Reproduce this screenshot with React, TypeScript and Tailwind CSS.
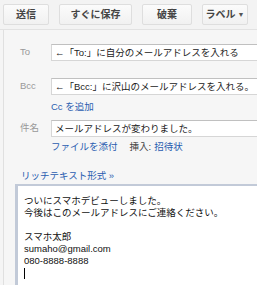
const font = { fontFamily: '"Liberation Sans", "Noto Sans CJK JP", sans-serif' };

function ToolButton({ label, w, caret }: { label: string; w: string; caret?: boolean }) {
  return (
    <div
      className={`flex h-[21px] ${w} items-center justify-center gap-[2px] rounded-[2px] border border-[#dedede] bg-gradient-to-b from-[#fbfbfb] to-[#f1f1f1] text-[10px] font-bold leading-none text-[#444]`}
    >
      <span>{label}</span>
      {caret && <span className="text-[7px] text-[#555]">▼</span>}
    </div>
  );
}

function FieldRow({ label, value }: { label: string; value: string }) {
  return (
    <div className="flex items-center">
      <div className="w-[47px] pl-[16px] text-[9.5px] text-[#999]">{label}</div>
      <div className="flex h-[17px] flex-1 items-center whitespace-nowrap border border-r-0 border-[#d6d6d6] border-t-[#c0c0c0] bg-white pl-[3px] text-[9.5px] leading-none text-[#222]">
        {value}
      </div>
    </div>
  );
}

export default function App() {
  return (
    <div className="h-[285px] w-[257px] overflow-hidden bg-[#f5f5f5]" style={font}>
      <div className="flex h-[30px] items-center gap-[10px] border-b border-[#e2e2e2] bg-[#f3f3f3] pl-[3px]">
        <ToolButton label="送信" w="w-[46px]" />
        <ToolButton label="すぐに保存" w="w-[73px]" />
        <ToolButton label="破棄" w="w-[50px]" />
        <ToolButton label="ラベル" w="w-[46px]" caret />
      </div>

      <div className="ml-[3px] h-[255px] border-l border-[#e0e0e0] bg-[#f6f6f6]">
        <div className="pt-[14px]">
          <FieldRow label="To" value="←「To:」に自分のメールアドレスを入れる" />
        </div>
        <div className="pt-[17px]">
          <FieldRow label="Bcc" value="←「Bcc:」に沢山のメールアドレスを入れる。" />
        </div>
        <div className="pl-[47px] pt-[5px] text-[9.5px] leading-[14px] text-[#2a5db0]">Cc を追加</div>

        <div className="pt-[6px]">
          <FieldRow label="件名" value="メールアドレスが変わりました。" />
        </div>
        <div className="flex pl-[47px] pt-[3px] text-[9.5px] leading-[14px]">
          <span className="text-[#2a5db0]">ファイルを添付</span>
          <span className="ml-[12px] text-[#444]">挿入:</span>
          <span className="ml-[3px] text-[#2a5db0]">招待状</span>
        </div>

        <div className="pl-[17px] pt-[15px] text-[9.5px] leading-[14px] text-[#2a5db0]">リッチテキスト形式 »</div>

        <div className="ml-[11px] mt-[1px] h-[120px] border-l-[3px] border-t-2 border-[#c2cad8] bg-white pl-[6px] pt-[9px] text-[9.5px] leading-[12px] text-[#111]">
          <div>ついにスマホデビューしました。</div>
          <div>今後はこのメールアドレスにご連絡ください。</div>
          <div className="h-[12px]" />
          <div>スマホ太郎</div>
          <div>sumaho@gmail.com</div>
          <div>080-8888-8888</div>
          <div className="mt-[1px] h-[11px] w-px bg-black" />
        </div>
      </div>
    </div>
  );
}
